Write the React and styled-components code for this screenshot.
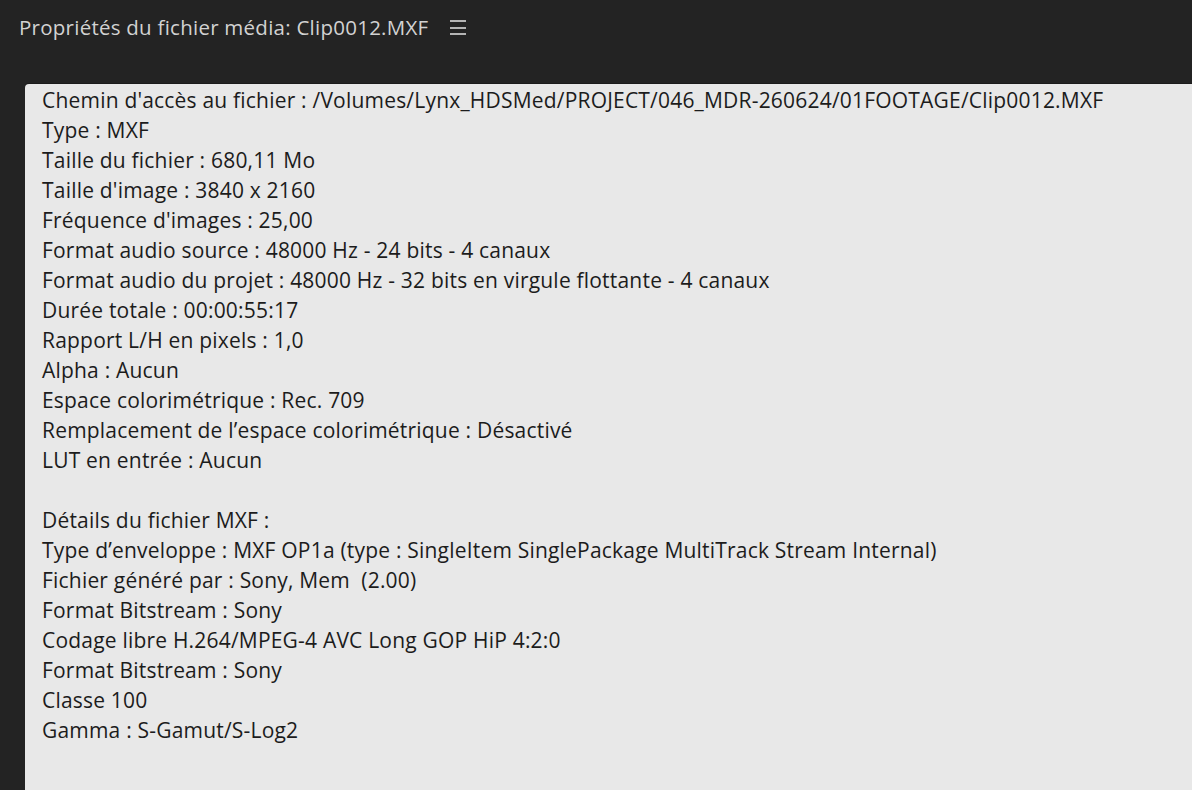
import React from 'react'
import styled, { createGlobalStyle } from 'styled-components'

const Global = createGlobalStyle`
  html, body {
    margin: 0;
    padding: 0;
    background: #232323;
    overflow: hidden;
  }
  body {
    font-family: "Open Sans", "Noto Sans", sans-serif;
  }
`

const Frame = styled.div`
  width: 1192px;
  height: 790px;
  background: #232323;
  display: flex;
  flex-direction: column;
  overflow: hidden;
`

const Header = styled.div`
  height: 84px;
  display: flex;
  align-items: flex-start;
  padding: 13px 0 0 19px;
  box-sizing: border-box;
  gap: 22px;
`

const Title = styled.h1`
  margin: 0;
  font-size: 20.5px;
  font-weight: 400;
  color: #d2d2d2;
  line-height: 28px;
  letter-spacing: 0.25px;
`

const Menu = styled.div`
  display: flex;
  flex-direction: column;
  gap: 4.5px;
  margin-top: 7px;
  span {
    display: block;
    width: 16px;
    height: 2px;
    background: #b4b4b4;
  }
`

const Panel = styled.div`
  flex: 1;
  margin-left: 25px;
  background: #e8e8e8;
  border-top-left-radius: 4px;
  padding: 1px 0 0 17px;
  box-shadow: 0 -1px 0 #1b1b1b;
`

const Line = styled.div`
  font-size: 21px;
  line-height: 30px;
  height: 30px;
  color: #1c1c1c;
  white-space: pre;
  letter-spacing: 0.2px;
`

const lines = [
  "Chemin d'accès au fichier : /Volumes/Lynx_HDSMed/PROJECT/046_MDR-260624/01FOOTAGE/Clip0012.MXF",
  'Type : MXF',
  'Taille du fichier : 680,11 Mo',
  "Taille d'image : 3840 x 2160",
  "Fréquence d'images : 25,00",
  'Format audio source : 48000 Hz - 24 bits - 4 canaux',
  'Format audio du projet : 48000 Hz - 32 bits en virgule flottante - 4 canaux',
  'Durée totale : 00:00:55:17',
  'Rapport L/H en pixels : 1,0',
  'Alpha : Aucun',
  'Espace colorimétrique : Rec. 709',
  'Remplacement de l’espace colorimétrique : Désactivé',
  'LUT en entrée : Aucun',
  '',
  'Détails du fichier MXF :',
  'Type d’enveloppe : MXF OP1a (type : SingleItem SinglePackage MultiTrack Stream Internal)',
  'Fichier généré par : Sony, Mem  (2.00)',
  'Format Bitstream : Sony',
  'Codage libre H.264/MPEG-4 AVC Long GOP HiP 4:2:0',
  'Format Bitstream : Sony',
  'Classe 100',
  'Gamma : S-Gamut/S-Log2',
]

export default function App() {
  return (
    <Frame>
      <Global />
      <Header>
        <Title>Propriétés du fichier média: Clip0012.MXF</Title>
        <Menu>
          <span />
          <span />
          <span />
        </Menu>
      </Header>
      <Panel>
        {lines.map((l, i) => (
          <Line key={i}>{l}</Line>
        ))}
      </Panel>
    </Frame>
  )
}
